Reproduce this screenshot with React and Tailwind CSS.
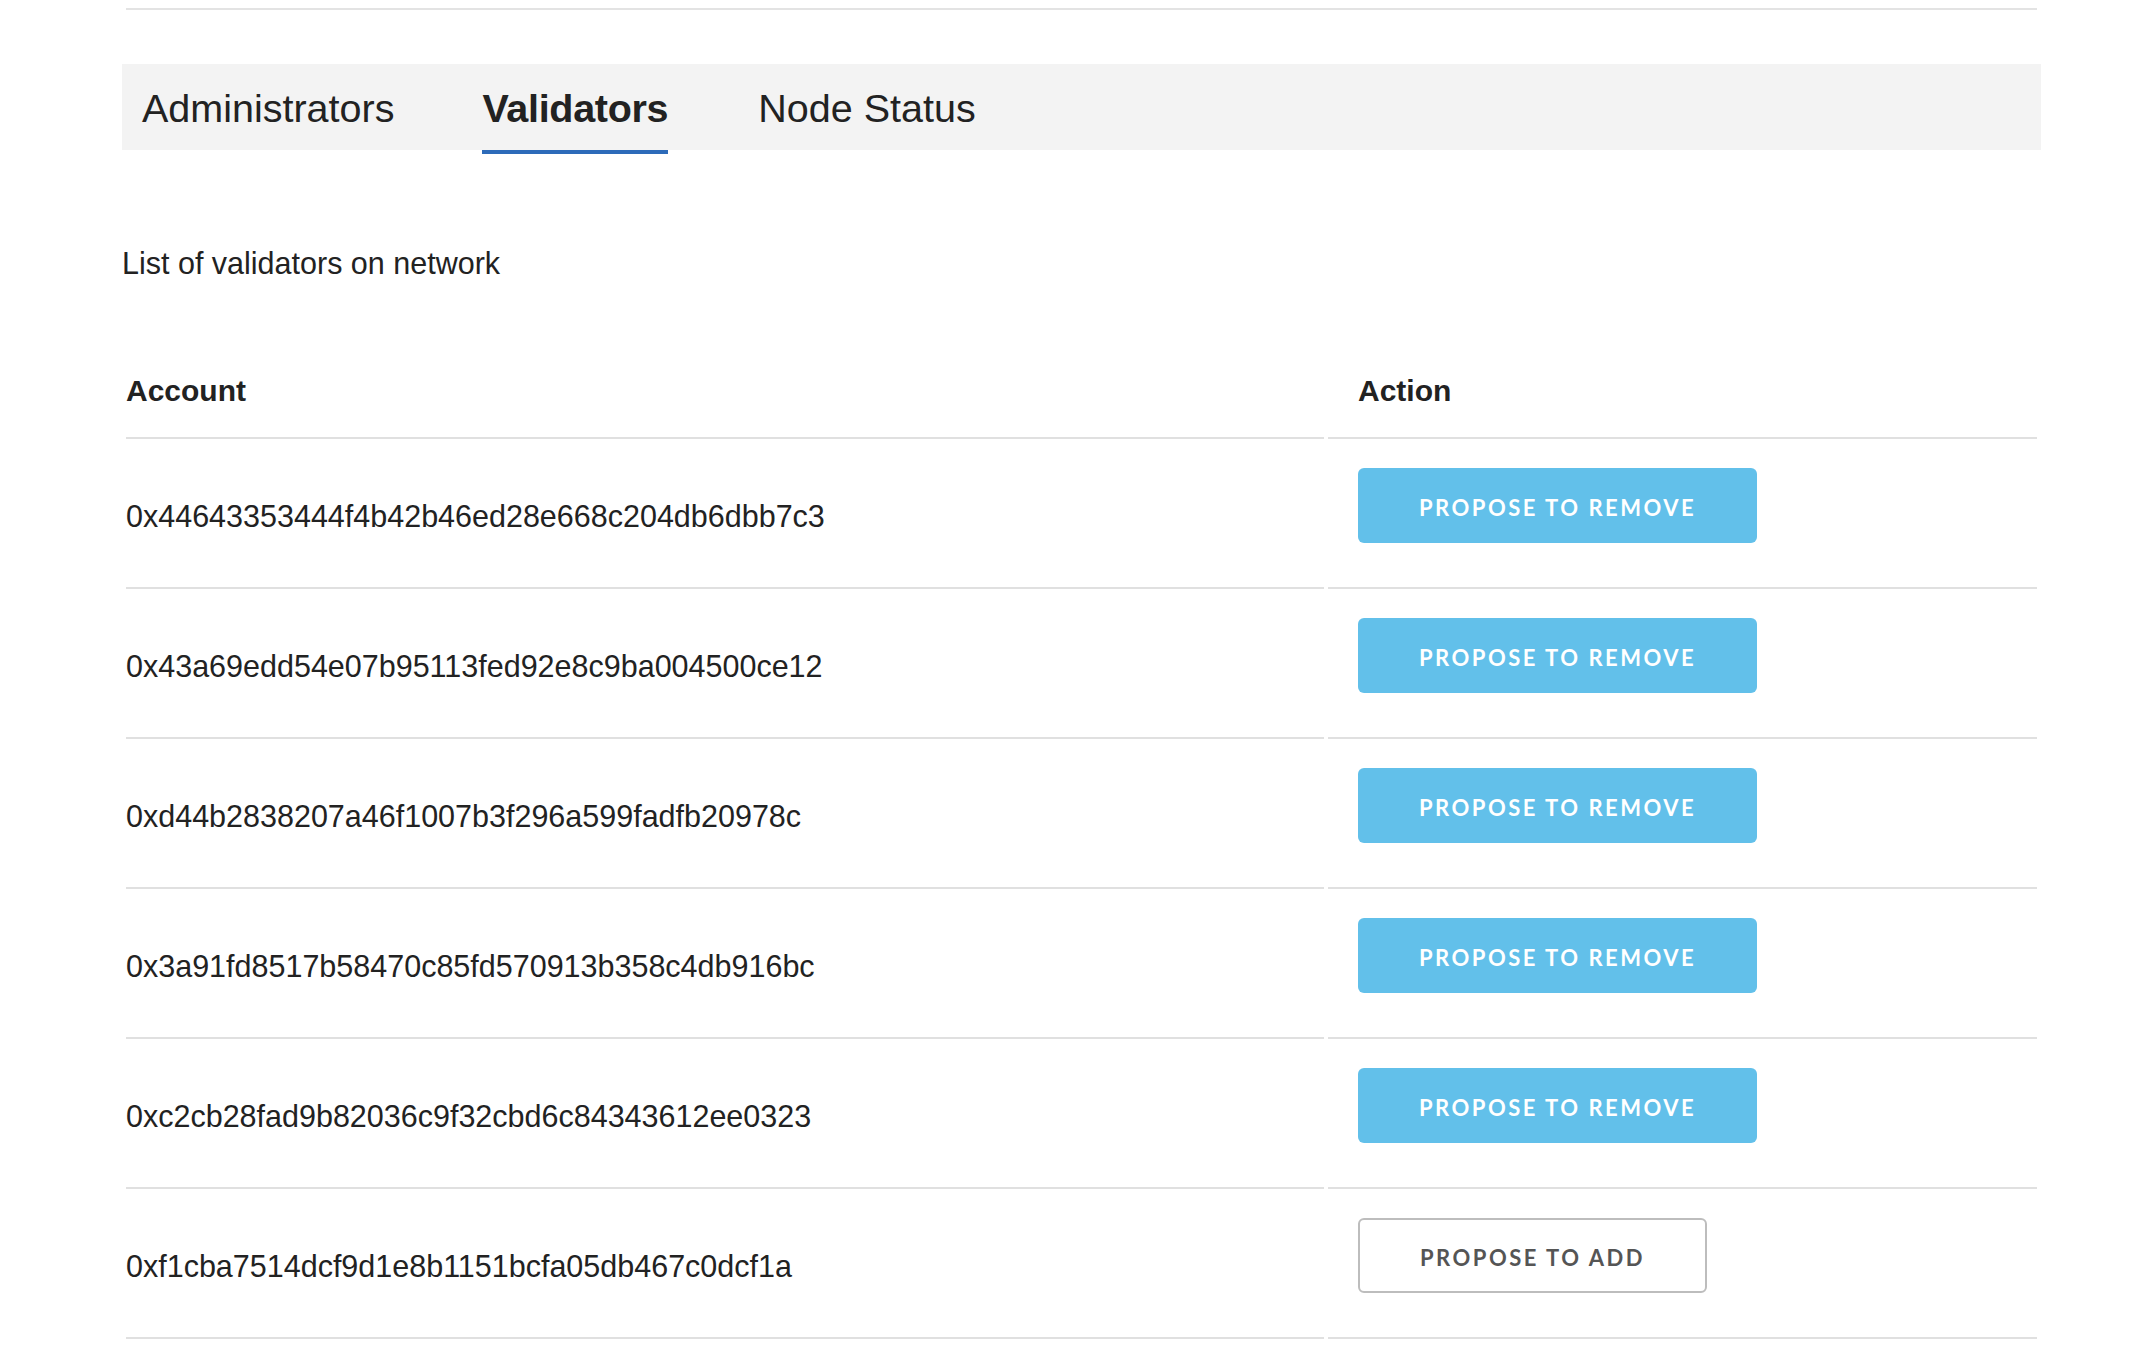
import React from "react";

const rows = [
  { addr: "0x44643353444f4b42b46ed28e668c204db6dbb7c3", add: false },
  { addr: "0x43a69edd54e07b95113fed92e8c9ba004500ce12", add: false },
  { addr: "0xd44b2838207a46f1007b3f296a599fadfb20978c", add: false },
  { addr: "0x3a91fd8517b58470c85fd570913b358c4db916bc", add: false },
  { addr: "0xc2cb28fad9b82036c9f32cbd6c84343612ee0323", add: false },
  { addr: "0xf1cba7514dcf9d1e8b1151bcfa05db467c0dcf1a", add: true },
];

export default function App() {
  return (
    <div
      className="min-h-screen bg-white text-[#222222]"
      style={{ fontFamily: '"Liberation Sans", Arial, Helvetica, sans-serif' }}
    >
      <div className="ml-[122px] w-[1919px] pt-[8px]">
        <div className="mx-[4px] h-[2px] bg-[#e3e3e3]" />

        <div className="mt-[54px] flex h-[86px] items-center bg-[#f3f3f3] pl-[20px] gap-[88px] text-[39.5px] leading-[48px]">
          <div className="pt-[2px] font-normal">Administrators</div>
          <div className="relative flex h-full items-center pt-[2px] font-bold tracking-[-0.3px]">
            Validators
            <span className="absolute left-0 right-0 -bottom-[4px] h-[4px] bg-[#2d6bb9]" />
          </div>
          <div className="ml-[2px] pt-[2px] font-normal">Node Status</div>
        </div>

        <p className="mt-[90px] text-[30.5px] leading-[46px]">List of validators on network</p>

        <table className="mt-[57px] w-full border-separate border-spacing-x-[4px] border-spacing-y-0 text-[30px]">
          <thead>
            <tr>
              <th className="w-[1198px] border-b-2 border-[#e0e0e0] pt-[30px] pb-[28px] text-left align-middle font-bold leading-[36px]">
                Account
              </th>
              <th className="border-b-2 border-[#e0e0e0] pl-[30px] pt-[30px] pb-[28px] text-left align-middle font-bold leading-[36px]">
                Action
              </th>
            </tr>
          </thead>
          <tbody>
            {rows.map((r) => (
              <tr key={r.addr}>
                <td className="border-b-2 border-[#e0e0e0] pt-[6px] align-middle text-[30.5px] leading-[36px]">
                  {r.addr}
                </td>
                <td className="border-b-2 border-[#e0e0e0] pl-[30px] pt-[29px] pb-[44px] align-top">
                  {r.add ? (
                    <button
                      className="flex h-[75px] items-center rounded-[6px] border-2 border-[#bdbdbd] bg-white px-[60px] pt-[4px] text-[22px] font-bold uppercase tracking-[2.5px] text-[#555555]"
                      style={{ fontFamily: 'Lato, "Open Sans", sans-serif' }}
                    >
                      Propose to add
                    </button>
                  ) : (
                    <button
                      className="flex h-[75px] items-center rounded-[6px] bg-[#62c0ea] px-[61px] pt-[4px] text-[22px] font-bold uppercase tracking-[2.5px] text-white"
                      style={{ fontFamily: 'Lato, "Open Sans", sans-serif' }}
                    >
                      Propose to remove
                    </button>
                  )}
                </td>
              </tr>
            ))}
          </tbody>
        </table>
      </div>
    </div>
  );
}
